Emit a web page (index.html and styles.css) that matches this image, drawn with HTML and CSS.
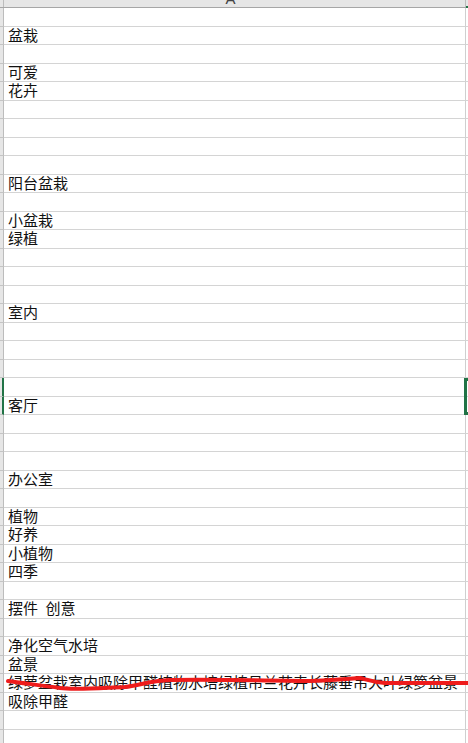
FILE: index.html
```html
<!DOCTYPE html>
<html lang="zh">
<head>
<meta charset="utf-8">
<title>Sheet</title>
<link rel="stylesheet" href="styles.css">
</head>
<body>
<div class="sheet">
  <div class="hdr">
    <div class="corner"></div>
    <div class="colhead"><span class="colname">A</span></div>
    <div class="colrest"></div>
  </div>
  <div class="row"><div class="rh"></div><div class="cell"></div><div class="rest"></div></div>
  <div class="row"><div class="rh"></div><div class="cell">盆栽</div><div class="rest"></div></div>
  <div class="row"><div class="rh"></div><div class="cell"></div><div class="rest"></div></div>
  <div class="row"><div class="rh"></div><div class="cell">可爱</div><div class="rest"></div></div>
  <div class="row"><div class="rh"></div><div class="cell">花卉</div><div class="rest"></div></div>
  <div class="row"><div class="rh"></div><div class="cell"></div><div class="rest"></div></div>
  <div class="row"><div class="rh"></div><div class="cell"></div><div class="rest"></div></div>
  <div class="row"><div class="rh"></div><div class="cell"></div><div class="rest"></div></div>
  <div class="row"><div class="rh"></div><div class="cell"></div><div class="rest"></div></div>
  <div class="row"><div class="rh"></div><div class="cell">阳台盆栽</div><div class="rest"></div></div>
  <div class="row"><div class="rh"></div><div class="cell"></div><div class="rest"></div></div>
  <div class="row"><div class="rh"></div><div class="cell">小盆栽</div><div class="rest"></div></div>
  <div class="row"><div class="rh"></div><div class="cell">绿植</div><div class="rest"></div></div>
  <div class="row"><div class="rh"></div><div class="cell"></div><div class="rest"></div></div>
  <div class="row"><div class="rh"></div><div class="cell"></div><div class="rest"></div></div>
  <div class="row"><div class="rh"></div><div class="cell"></div><div class="rest"></div></div>
  <div class="row"><div class="rh"></div><div class="cell">室内</div><div class="rest"></div></div>
  <div class="row"><div class="rh"></div><div class="cell"></div><div class="rest"></div></div>
  <div class="row"><div class="rh"></div><div class="cell"></div><div class="rest"></div></div>
  <div class="row"><div class="rh"></div><div class="cell"></div><div class="rest"></div></div>
  <div class="row"><div class="rh rh-sel"></div><div class="cell"></div><div class="rest"></div></div>
  <div class="row"><div class="rh rh-sel"></div><div class="cell">客厅</div><div class="rest"></div></div>
  <div class="row"><div class="rh"></div><div class="cell"></div><div class="rest"></div></div>
  <div class="row"><div class="rh"></div><div class="cell"></div><div class="rest"></div></div>
  <div class="row"><div class="rh"></div><div class="cell"></div><div class="rest"></div></div>
  <div class="row"><div class="rh"></div><div class="cell">办公室</div><div class="rest"></div></div>
  <div class="row"><div class="rh"></div><div class="cell"></div><div class="rest"></div></div>
  <div class="row"><div class="rh"></div><div class="cell">植物</div><div class="rest"></div></div>
  <div class="row"><div class="rh"></div><div class="cell">好养</div><div class="rest"></div></div>
  <div class="row"><div class="rh"></div><div class="cell">小植物</div><div class="rest"></div></div>
  <div class="row"><div class="rh"></div><div class="cell">四季</div><div class="rest"></div></div>
  <div class="row"><div class="rh"></div><div class="cell"></div><div class="rest"></div></div>
  <div class="row"><div class="rh"></div><div class="cell">摆件&ensp;创意</div><div class="rest"></div></div>
  <div class="row"><div class="rh"></div><div class="cell"></div><div class="rest"></div></div>
  <div class="row"><div class="rh"></div><div class="cell">净化空气水培</div><div class="rest"></div></div>
  <div class="row"><div class="rh"></div><div class="cell">盆景</div><div class="rest"></div></div>
  <div class="row"><div class="rh"></div><div class="cell">绿萝盆栽室内吸除甲醛植物水培绿植吊兰花卉长藤垂吊大叶绿箩盆景</div><div class="rest"></div></div>
  <div class="row"><div class="rh"></div><div class="cell">吸除甲醛</div><div class="rest"></div></div>
  <div class="row"><div class="rh"></div><div class="cell"></div><div class="rest"></div></div>
  <div class="row"><div class="rh"></div><div class="cell"></div><div class="rest"></div></div>

  <div class="selection"></div>

  <svg class="scribble" width="468" height="743" viewBox="0 0 468 743" xmlns="http://www.w3.org/2000/svg">
    <path d="M8 681 C 20 683, 40 685, 60 688 C 75 690, 100 688, 125 687 C 140 685, 150 681, 170 680 C 200 679, 250 680, 300 681 C 325 681, 345 679, 360 678 C 368 680, 372 682, 385 683 L 468 683" fill="none" stroke="#ee1c1c" stroke-width="4" stroke-linecap="round" stroke-linejoin="round"/>
  </svg>
</div>
</body>
</html>
```

FILE: styles.css
```css
html, body {
  margin: 0;
  padding: 0;
  background: #ffffff;
}

.sheet {
  position: relative;
  width: 468px;
  height: 743px;
  overflow: hidden;
  display: flex;
  flex-direction: column;
  font-family: "Noto Sans CJK SC", "Noto Sans", sans-serif;
}

.hdr {
  display: flex;
  height: 8px;
  flex: 0 0 8px;
  box-sizing: border-box;
  background: #e6e6e6;
  border-bottom: 1px solid #a6a6a6;
}

.corner {
  width: 4px;
  box-sizing: border-box;
  border-right: 1px solid #bcbcbc;
}

.colhead {
  width: 462px;
  box-sizing: border-box;
  border-right: 1px solid #bcbcbc;
  overflow: hidden;
  text-align: center;
  padding-right: 8px;
}

.colname {
  display: block;
  font-family: "Liberation Sans", Arial, sans-serif;
  font-size: 15px;
  line-height: 14px;
  margin-top: -8px;
  color: #444444;
}

.colrest {
  flex: 1;
  box-sizing: border-box;
  border-bottom: 2px solid #217346;
  margin-bottom: -1px;
}

.row {
  display: flex;
  height: 18.5px;
  flex: 0 0 18.5px;
}

.rh {
  width: 4px;
  box-sizing: border-box;
  background: #e6e6e6;
  border-right: 1px solid #bcbcbc;
  border-bottom: 1px solid #c4c4c4;
}

.rh-sel {
  border-right: 2px solid #217346;
}

.cell {
  width: 462px;
  box-sizing: border-box;
  border-right: 1px solid #cfcfcf;
  border-bottom: 1px solid #d4d4d4;
  padding-left: 4px;
  font-size: 15px;
  line-height: 15px;
  color: #111111;
  white-space: nowrap;
}

.rest {
  flex: 1;
  box-sizing: border-box;
  border-bottom: 1px solid #d4d4d4;
}

.selection {
  position: absolute;
  left: 464px;
  top: 378px;
  width: 8px;
  height: 37px;
  box-sizing: border-box;
  border: 3px solid #217346;
}

.scribble {
  position: absolute;
  left: 0;
  top: 0;
  pointer-events: none;
}
```
